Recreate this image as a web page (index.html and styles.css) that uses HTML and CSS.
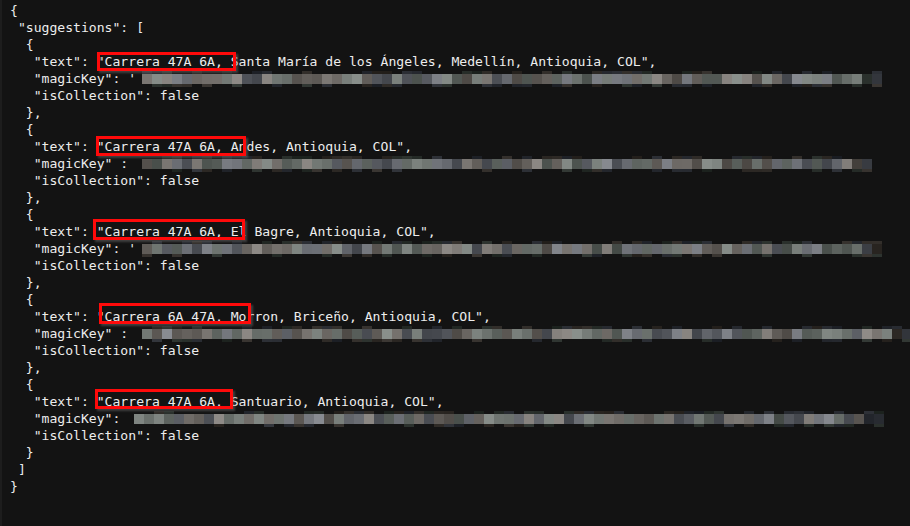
FILE: index.html
```html
<!DOCTYPE html>
<html>
<head>
<meta charset="utf-8">
<link rel="stylesheet" href="styles.css">
</head>
<body>
<div class="viewer">
<pre class="code">{
 "suggestions": [
  {
   "text": "Carrera 47A 6A, Santa María de los Ángeles, Medellín, Antioquia, COL",
   "magicKey": '<span class="mosaic" data-w="741" data-seed="3"></span>
   "isCollection": false
  },
  {
   "text": "Carrera 47A 6A, Andes, Antioquia, COL",
   "magicKey" : <span class="mosaic" data-w="730" data-seed="7"></span>
   "isCollection": false
  },
  {
   "text": "Carrera 47A 6A, El Bagre, Antioquia, COL",
   "magicKey": '<span class="mosaic" data-w="740" data-seed="11"></span>
   "isCollection": false
  },
  {
   "text": "Carrera 6A 47A, Morron, Briceño, Antioquia, COL",
   "magicKey" : <span class="mosaic" data-w="772" data-seed="19"></span>
   "isCollection": false
  },
  {
   "text": "Carrera 47A 6A, Santuario, Antioquia, COL",
   "magicKey": <span class="mosaic" data-w="752" data-seed="23"></span>
   "isCollection": false
  }
 ]
}</pre>
<div class="mark m1"></div>
<div class="mark m2"></div>
<div class="mark m3"></div>
<div class="mark m4"></div>
<div class="mark m5"></div>
</div>
<script src="script.js"></script>
</body>
</html>
```
FILE: styles.css
```css
html, body {
  margin: 0;
  padding: 0;
  background: #131313;
  width: 910px;
  height: 526px;
  overflow: hidden;
}
.viewer {
  position: relative;
  height: 526px;
  border-left: 2px solid #1d1d1d;
  box-sizing: border-box;
}
.code {
  margin: 0;
  padding: 2px 0 0 8px;
  font-family: "DejaVu Sans Mono", "Liberation Mono", monospace;
  font-size: 13.1px;
  line-height: 17px;
  color: #ededed;
  white-space: pre;
}
.mosaic {
  display: inline-flex;
  vertical-align: top;
  height: 17px;
  margin-left: 6px;
}
.mosaic .col {
  width: 10px;
  display: flex;
  flex-direction: column;
}
.mosaic .top { height: 3px; margin-top: 1px; }
.mosaic .mid { height: 10px; }
.mosaic .bot { height: 3px; }
.mark {
  position: absolute;
  border: 3px solid #ff0a0a;
  box-sizing: border-box;
  box-shadow: 2px 2px 2px rgba(120,120,120,0.45);
}
.m1 { left: 95px; top: 52px; width: 139px; height: 19px; }
.m2 { left: 94px; top: 136px; width: 150px; height: 20px; }
.m3 { left: 91px; top: 219px; width: 152px; height: 21px; }
.m4 { left: 97px; top: 303px; width: 152px; height: 21px; }
.m5 { left: 93px; top: 389px; width: 138px; height: 20px; }
```
FILE: script.js
```js
(function () {
  function rng(seed) {
    var s = seed * 9301 + 49297;
    return function () {
      s = (s * 9301 + 49297) % 233280;
      return s / 233280;
    };
  }
  function grey(r, base, spread) {
    var g = base + Math.floor(r() * spread);
    var t = Math.floor(r() * 3);
    var dr = 0, dg = 0, db = 0;
    if (t === 0) { dr = 6; dg = 2; db = -2; }
    else if (t === 1) { dr = -3; dg = 0; db = 6; }
    else { dr = -2; dg = 4; db = 0; }
    return "rgb(" + (g + dr) + "," + (g + dg) + "," + (g + db) + ")";
  }
  var els = document.querySelectorAll(".mosaic");
  for (var i = 0; i < els.length; i++) {
    var el = els[i];
    var w = parseInt(el.getAttribute("data-w"), 10);
    var r = rng(parseInt(el.getAttribute("data-seed"), 10));
    var n = Math.round(w / 10);
    for (var k = 0; k < n; k++) {
      var col = document.createElement("span");
      col.className = "col";
      var top = document.createElement("span");
      top.className = "top";
      top.style.background = r() < 0.5 ? grey(r, 28, 22) : "transparent";
      var mid = document.createElement("span");
      mid.className = "mid";
      var fade = k > n - 3 ? 0.45 : 1;
      mid.style.background = grey(r, Math.round(70 * fade), Math.round(70 * fade));
      var bot = document.createElement("span");
      bot.className = "bot";
      bot.style.background = r() < 0.4 ? grey(r, 30, 25) : "transparent";
      col.appendChild(top);
      col.appendChild(mid);
      col.appendChild(bot);
      el.appendChild(col);
    }
  }
})();
```
